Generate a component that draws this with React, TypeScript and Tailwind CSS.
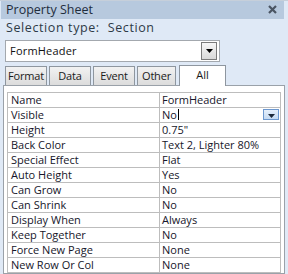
const font = "font-['Segoe_UI','Open_Sans','Noto_Sans',sans-serif]";

const rows: [string, string][] = [
  ["Name", "FormHeader"],
  ["Visible", "No"],
  ["Height", "0.75\""],
  ["Back Color", "Text 2, Lighter 80%"],
  ["Special Effect", "Flat"],
  ["Auto Height", "Yes"],
  ["Can Grow", "No"],
  ["Can Shrink", "No"],
  ["Display When", "Always"],
  ["Keep Together", "No"],
  ["Force New Page", "None"],
  ["New Row Or Col", "None"],
];

const tabs: [string, string][] = [
  ["Format", "w-[42px]"],
  ["Data", "w-[42px]"],
  ["Event", "w-[42px]"],
  ["Other", "w-[39px]"],
];

function Arrow({ color = "#000" }: { color?: string }) {
  return (
    <svg width="7" height="4" viewBox="0 0 7 4">
      <path d="M0 0 H7 L3.5 4 Z" fill={color} />
    </svg>
  );
}

export default function App() {
  return (
    <div
      className={`w-[288px] h-[274px] overflow-hidden bg-[#dfe9f6] border-t border-[#c6cfda] flex flex-col ${font}`}
    >
      {/* title bar */}
      <div className="ml-[1px] w-[283px] h-[18px] bg-[#b7c9de] flex items-center justify-between pl-[5px] pr-[7px]">
        <span className="text-[12.5px] leading-none text-[#1f2d3d]">Property Sheet</span>
        <svg width="9" height="9" viewBox="0 0 9 9">
          <path d="M1 1 L8 8 M8 1 L1 8" stroke="#4a5563" strokeWidth="2.2" />
        </svg>
      </div>

      {/* selection type */}
      <div className="h-[21px] flex items-center pl-[6px] text-[12.5px] tracking-[0.6px] text-[#2e3a46] gap-[8px]">
        <span>Selection type:</span>
        <span>Section</span>
      </div>

      {/* combo box */}
      <div className="mt-[1px] ml-[5px] w-[215px] h-[22px] bg-white border border-[#a3a8ae] flex items-center justify-between pl-[4px] pr-[2px]">
        <span className="text-[11px] tracking-[0.2px] text-[#111]">FormHeader</span>
        <div className="w-[16px] h-[18px] border border-[#7b7b7b] bg-gradient-to-b from-[#f6f6f6] to-[#d9d9d9] flex items-center justify-center">
          <Arrow />
        </div>
      </div>

      {/* tabs */}
      <div className="mt-[3px] ml-[5px] h-[21px] flex items-end gap-[2px] relative z-10">
        {tabs.map(([t, w]) => (
          <div
            key={t}
            className={`${w} h-[19px] border border-b-0 border-[#8e969f] bg-gradient-to-b from-[#f2f2f2] to-[#dcdcdc] flex items-center justify-center text-[11px] tracking-[-0.2px] text-[#1a1a1a]`}
          >
            {t}
          </div>
        ))}
        <div className="ml-[1px] w-[47px] h-[21px] -mb-[1px] border border-b-0 border-[#8e969f] bg-white flex items-start justify-center pt-[1px] text-[11px] text-[#1a1a1a]">
          All
        </div>
      </div>

      {/* property grid frame */}
      <div className="ml-[3px] w-[282px] flex-1 bg-white border border-[#9aa1a9] pt-[6px] pl-[3px]">
        <div className="w-[274px] border-l border-t border-[#bdbdbd]">
          {rows.map(([label, value], i) => (
            <div key={label} className="flex h-[15px] border-b border-[#bdbdbd] text-[11px] leading-none text-[#16162a]">
              <div className="w-[152px] pl-[3px] border-r border-[#bdbdbd] flex items-center">{label}</div>
              <div className="flex-1 pl-[2px] border-r border-[#bdbdbd] flex items-center justify-between pr-[1px]">
                <span className="flex items-center">
                  {value}
                  {i === 1 && <span className="ml-[1px] w-[1px] h-[11px] bg-black" />}
                </span>
                {i === 1 && (
                  <div className="w-[16px] h-[11px] border border-[#6d98cf] bg-gradient-to-b from-[#e6f0fb] to-[#c5daf2] flex items-end justify-center pb-[1px]">
                    <Arrow color="#1e2a3a" />
                  </div>
                )}
              </div>
            </div>
          ))}
        </div>
      </div>
    </div>
  );
}
